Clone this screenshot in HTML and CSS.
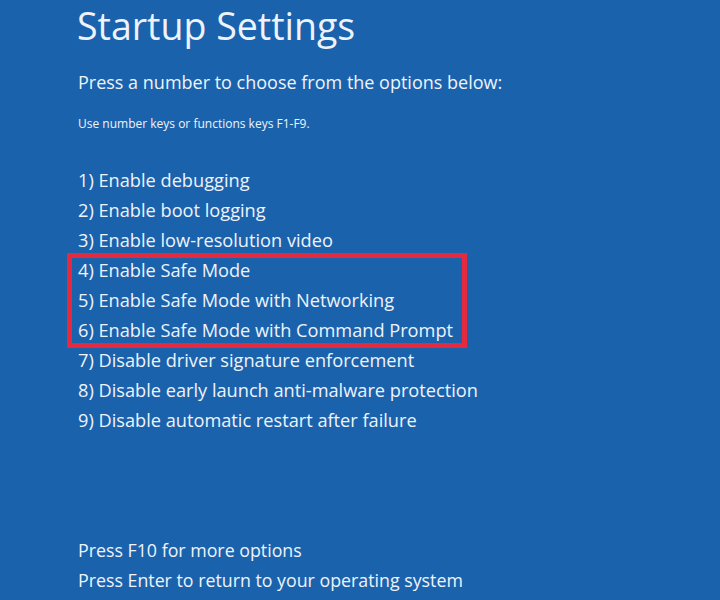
FILE: index.html
```html
<!DOCTYPE html>
<html lang="en">
<head>
    <meta charset="UTF-8">
    <title>Startup Settings</title>
    <link rel="stylesheet" href="styles.css">
</head>
<body>

<div class="screen">
  <h1 class="title">Startup Settings</h1>
  <p class="lead">Press a number to choose from the options below:</p>
  <p class="hint">Use number keys or functions keys F1-F9.</p>

  <div class="options">
    <div class="option">1) Enable debugging</div>
    <div class="option">2) Enable boot logging</div>
    <div class="option">3) Enable low-resolution video</div>
    <div class="option">4) Enable Safe Mode</div>
    <div class="option">5) Enable Safe Mode with Networking</div>
    <div class="option">6) Enable Safe Mode with Command Prompt</div>
    <div class="option">7) Disable driver signature enforcement</div>
    <div class="option">8) Disable early launch anti-malware protection</div>
    <div class="option">9) Disable automatic restart after failure</div>
    <div class="highlight"></div>
  </div>

  <div class="footer">
    <div class="option footer-line">Press F10 for more options</div>
    <div class="option footer-line">Press Enter to return to your operating system</div>
  </div>
</div>

</body>
</html>
```

FILE: styles.css
```css
body {
  margin: 0;
  background-color: #1b62ad;
  font-family: "Open Sans", "Noto Sans", sans-serif;
  color: #eef3fa;
}

.screen {
  height: 600px;
  padding: 4px 0 0 78px;
  box-sizing: border-box;
  overflow: hidden;
}

.title {
  margin: 0 0 0 -1px;
  font-size: 37.5px;
  font-weight: 400;
  line-height: 44px;
}

.lead {
  margin: 21px 0 0;
  font-size: 18px;
  line-height: 26px;
}

.hint {
  margin: 20px 0 0;
  font-size: 12px;
  line-height: 18px;
}

.options {
  position: relative;
  margin-top: 32px;
}

.option {
  font-size: 18.2px;
  line-height: 30px;
}

.footer-line {
  font-size: 17.8px;
}

.highlight {
  position: absolute;
  left: -11px;
  top: 88px;
  width: 400px;
  height: 95px;
  box-sizing: border-box;
  border: 5px solid #e52a3f;
}

.footer {
  margin-top: 100px;
}
```
